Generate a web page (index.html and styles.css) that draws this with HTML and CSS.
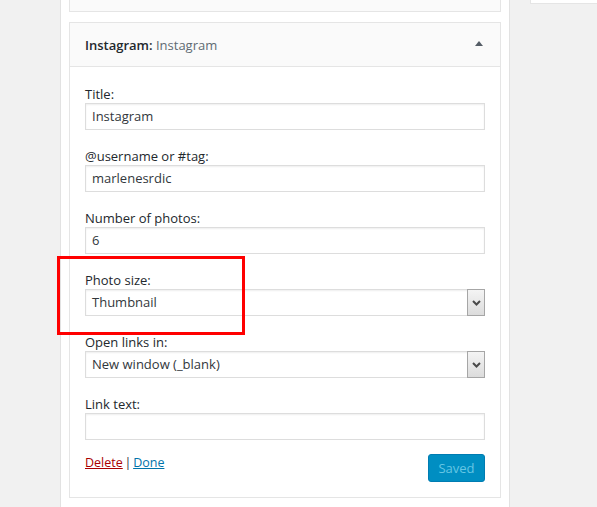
FILE: index.html
```html
<!DOCTYPE html>
<html>
<head>
<meta charset="utf-8">
<link rel="stylesheet" href="styles.css">
</head>
<body>
<div class="page">
  <div class="gutter"></div>
  <div class="sidebar">
    <div class="widget widget-prev"></div>
    <div class="widget">
      <div class="widget-top">
        <h3 class="widget-title"><span class="wname">Instagram:</span> <span class="in-title">Instagram</span></h3>
        <span class="toggle"></span>
      </div>
      <div class="widget-inside">
        <div class="fields">
          <div class="field">
            <div class="label">Title:</div>
            <div class="input">Instagram</div>
          </div>
          <div class="field">
            <div class="label">@username or #tag:</div>
            <div class="input">marlenesrdic</div>
          </div>
          <div class="field">
            <div class="label">Number of photos:</div>
            <div class="input">6</div>
          </div>
          <div class="field">
            <div class="label">Photo size:</div>
            <div class="select"><span class="select-text">Thumbnail</span><span class="select-btn"><svg width="9" height="6" viewBox="0 0 9 6"><polyline points="1,1 4.5,4.5 8,1" fill="none" stroke="#4a4a4a" stroke-width="2"/></svg></span></div>
          </div>
          <div class="field">
            <div class="label">Open links in:</div>
            <div class="select"><span class="select-text">New window (_blank)</span><span class="select-btn"><svg width="9" height="6" viewBox="0 0 9 6"><polyline points="1,1 4.5,4.5 8,1" fill="none" stroke="#4a4a4a" stroke-width="2"/></svg></span></div>
          </div>
          <div class="field">
            <div class="label">Link text:</div>
            <div class="input"></div>
          </div>
        </div>
        <div class="actions">
          <div class="links"><a class="delete" href="#">Delete</a> | <a class="done" href="#">Done</a></div>
          <span class="btn-saved">Saved</span>
        </div>
      </div>
    </div>
  </div>
  <div class="right">
    <div class="right-box"></div>
  </div>
  <div class="highlight"></div>
</div>
</body>
</html>
```
FILE: styles.css
```css
* { box-sizing: border-box; }
html, body { margin: 0; padding: 0; }
body {
  background: #f1f1f1;
  font-family: "Open Sans", "Noto Sans", sans-serif;
  font-size: 13px;
  color: #32373c;
}
.page {
  position: relative;
  display: flex;
  height: 507px;
  overflow: hidden;
}
.gutter { width: 60px; flex: none; }
.sidebar {
  width: 450px;
  flex: none;
  background: #fff;
  border-left: 1px solid #e2e2e2;
  border-right: 1px solid #e2e2e2;
  padding: 0 8px;
  display: flex;
  flex-direction: column;
  gap: 10px;
}
.widget {
  border: 1px solid #e5e5e5;
  background: #fff;
}
.widget-prev {
  height: 12px;
  border-top: none;
  background: #fafafa;
}
.widget-top {
  height: 44px;
  background: #fafafa;
  border-bottom: 1px solid #e5e5e5;
  display: flex;
  align-items: center;
  justify-content: space-between;
  padding: 0 17px 0 15px;
}
.widget-title {
  margin: 0;
  font-size: 13px;
  font-weight: 600;
  line-height: 18px;
}
.wname { color: #23282d; }
.in-title { color: #606a73; font-weight: 400; }
.toggle {
  width: 0;
  height: 0;
  border-left: 4px solid transparent;
  border-right: 4px solid transparent;
  border-bottom: 5px solid #555d66;
  margin-top: -2px;
}
.widget-inside {
  padding: 18px 15px 15px;
}
.fields {
  display: flex;
  flex-direction: column;
  gap: 17px;
}
.field {
  display: flex;
  flex-direction: column;
}
.label {
  line-height: 18px;
  height: 18px;
  color: #23282d;
}
.input, .select {
  height: 27px;
  border: 1px solid #ddd;
  box-shadow: inset 0 1px 2px rgba(0,0,0,0.07);
  font-size: 13px;
  line-height: 25px;
  color: #32373c;
  padding: 0 6px;
}
.select {
  display: flex;
  align-items: stretch;
  padding: 0 0 0 6px;
}
.select-text { flex: 1; }
.select-btn {
  width: 18px;
  margin: -1px -1px -1px 0;
  border: 1px solid #a6a6a6;
  background: linear-gradient(#f4f4f4, #dcdcdc);
  display: flex;
  align-items: center;
  justify-content: center;
}
.actions {
  margin-top: 14px;
  display: flex;
  justify-content: space-between;
  align-items: flex-start;
}
.links {
  line-height: 18px;
  font-size: 12.5px;
  word-spacing: -1.5px;
  color: #32373c;
}
.delete { color: #a00; }
.done { color: #0073aa; }
.btn-saved {
  width: 57px;
  height: 28px;
  border-radius: 3px;
  background: #008ec2;
  border: 1px solid #007cb2;
  color: #66c6e4;
  line-height: 26px;
  text-align: center;
  font-size: 13px;
}
.right {
  margin-left: 20px;
  flex: 1;
}
.right-box {
  height: 4px;
  background: #fff;
  border-left: 1px solid #e5e5e5;
  border-bottom: 1px solid #e5e5e5;
}
.highlight {
  position: absolute;
  left: 57px;
  top: 256px;
  width: 188px;
  height: 79px;
  border: 3px solid #f00;
}
```
